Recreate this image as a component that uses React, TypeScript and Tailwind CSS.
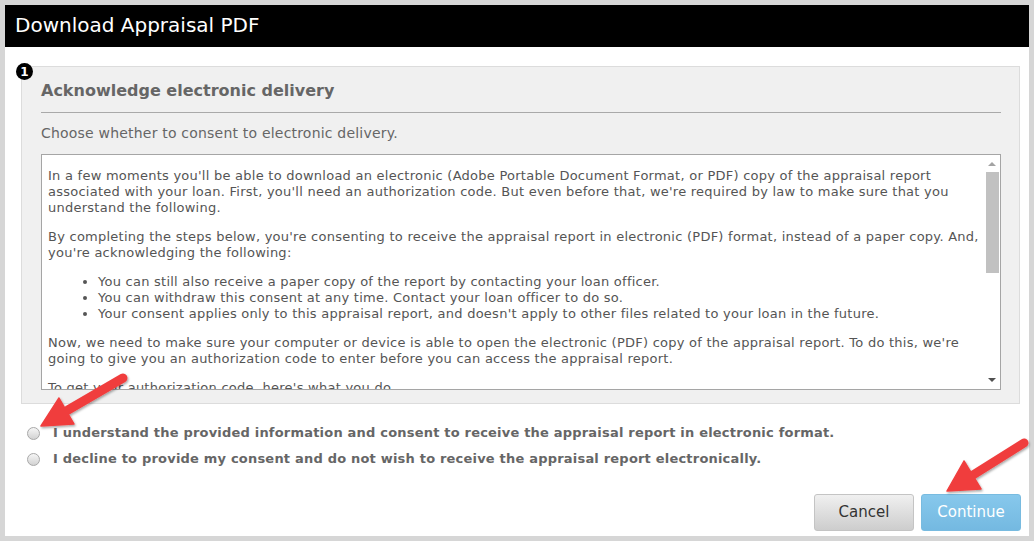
export default function App() {
  const font = { fontFamily: '"DejaVu Sans", Verdana, sans-serif' };

  return (
    <div
      className="relative h-[541px] w-[1034px] overflow-hidden bg-[#d6d6d6] pl-[5px] pt-[5px]"
      style={font}
    >
      <div className="flex h-[531px] w-[1024px] flex-col bg-white">
        <div className="flex h-[42px] items-center bg-black pb-[2px] pl-[10px] text-[20px] text-white">
          Download Appraisal PDF
        </div>

        <div className="pl-[16px] pr-[8px] pt-[19px]">
          {/* step panel */}
          <div className="relative mr-[1px] border border-[#dcdcdc] bg-[#f0f0f0] pb-[13px] pl-[19px] pr-[18px] pt-[14px]">
            <div className="absolute -left-[6px] -top-[4px] flex h-[17px] w-[17px] items-center justify-center rounded-full bg-black text-[12px] font-bold leading-none text-white">
              1
            </div>

            <h2 className="text-[16px] font-bold leading-[20px] text-[#666]">
              Acknowledge electronic delivery
            </h2>
            <div className="mt-[11px] h-px bg-[#a9a9a9]" />
            <p className="mt-[12px] text-[14px] leading-[16px] tracking-[0.2px] text-[#666]">
              Choose whether to consent to electronic delivery.
            </p>

            <div className="mt-[13px] flex h-[236px] border border-[#a5a5a5] bg-white">
              <div className="flex-1 overflow-hidden pl-[6px] text-[13px] leading-[16px] tracking-[0.25px] text-[#555]">
                <p className="my-[13px]">
                  In a few moments you'll be able to download an electronic (Adobe Portable Document Format, or PDF) copy of the appraisal report associated with your loan. First, you'll need an authorization code. But even before that, we're required by law to make sure that you understand the following.
                </p>
                <p className="my-[13px]">
                  By completing the steps below, you're consenting to receive the appraisal report in electronic (PDF) format, instead of a paper copy. And, you're acknowledging the following:
                </p>
                <ul className="my-[13px] list-disc pl-[50px]">
                  <li>You can still also receive a paper copy of the report by contacting your loan officer.</li>
                  <li>You can withdraw this consent at any time. Contact your loan officer to do so.</li>
                  <li>Your consent applies only to this appraisal report, and doesn't apply to other files related to your loan in the future.</li>
                </ul>
                <p className="my-[13px]">
                  Now, we need to make sure your computer or device is able to open the electronic (PDF) copy of the appraisal report. To do this, we're going to give you an authorization code to enter before you can access the appraisal report.
                </p>
                <p className="my-[13px]">To get your authorization code, here's what you do.</p>
              </div>

              {/* scrollbar */}
              <div className="flex w-[16px] flex-col items-center bg-white">
                <div className="mt-[7px] h-0 w-0 border-x-[4px] border-b-[4px] border-x-transparent border-b-[#a3a3a3]" />
                <div className="mt-[6px] h-[101px] w-[13px] bg-[#c1c1c1]" />
                <div className="mb-[7px] mt-auto h-0 w-0 border-x-[4px] border-t-[4px] border-x-transparent border-t-[#505050]" />
              </div>
            </div>
          </div>

          {/* consent options */}
          <div className="ml-[6px] mt-[19px] flex flex-col gap-[6px]">
            {[
              "I understand the provided information and consent to receive the appraisal report in electronic format.",
              "I decline to provide my consent and do not wish to receive the appraisal report electronically.",
            ].map((label) => (
              <label key={label} className="flex h-[20px] items-center gap-[13px]">
                <span className="h-[13px] w-[13px] rounded-full border border-[#a8a8a8] bg-gradient-to-b from-[#f6f6f6] to-[#d2d2d2]" />
                <span className="text-[13px] font-bold tracking-[0.2px] text-[#666]">{label}</span>
              </label>
            ))}
          </div>

          <div className="mt-[25px] flex justify-end gap-[7px]">
            <button
              type="button"
              className="h-[37px] w-[100px] rounded-[3px] border border-[#c4c4c4] bg-gradient-to-b from-[#f0f0f0] to-[#cdcdcd] text-[15px] text-[#333]"
            >
              Cancel
            </button>
            <button
              type="button"
              className="h-[37px] w-[100px] rounded-[3px] border border-[#78bbe0] bg-gradient-to-b from-[#87c8ec] to-[#74b9e1] text-[15px] text-white"
            >
              Continue
            </button>
          </div>
        </div>
      </div>

      {/* annotation arrows */}
      <svg
        className="pointer-events-none absolute left-0 top-0"
        width="1034"
        height="541"
        viewBox="0 0 1034 541"
      >
        <defs>
          <filter id="sh" x="-20%" y="-20%" width="140%" height="140%">
            <feDropShadow dx="1" dy="1.5" stdDeviation="1.2" floodColor="#000" floodOpacity="0.35" />
          </filter>
        </defs>
        <g filter="url(#sh)" fill="#f03e3e" stroke="#f03e3e">
          <line x1="123" y1="378" x2="68" y2="410" strokeWidth="9" strokeLinecap="round" />
          <polygon points="41,426 74,424 59,398" strokeWidth="1.5" strokeLinejoin="round" />
          <line x1="1024" y1="443" x2="973" y2="475" strokeWidth="9" strokeLinecap="round" />
          <polygon points="947,491 981,489 964,461" strokeWidth="1.5" strokeLinejoin="round" />
        </g>
      </svg>
    </div>
  );
}
